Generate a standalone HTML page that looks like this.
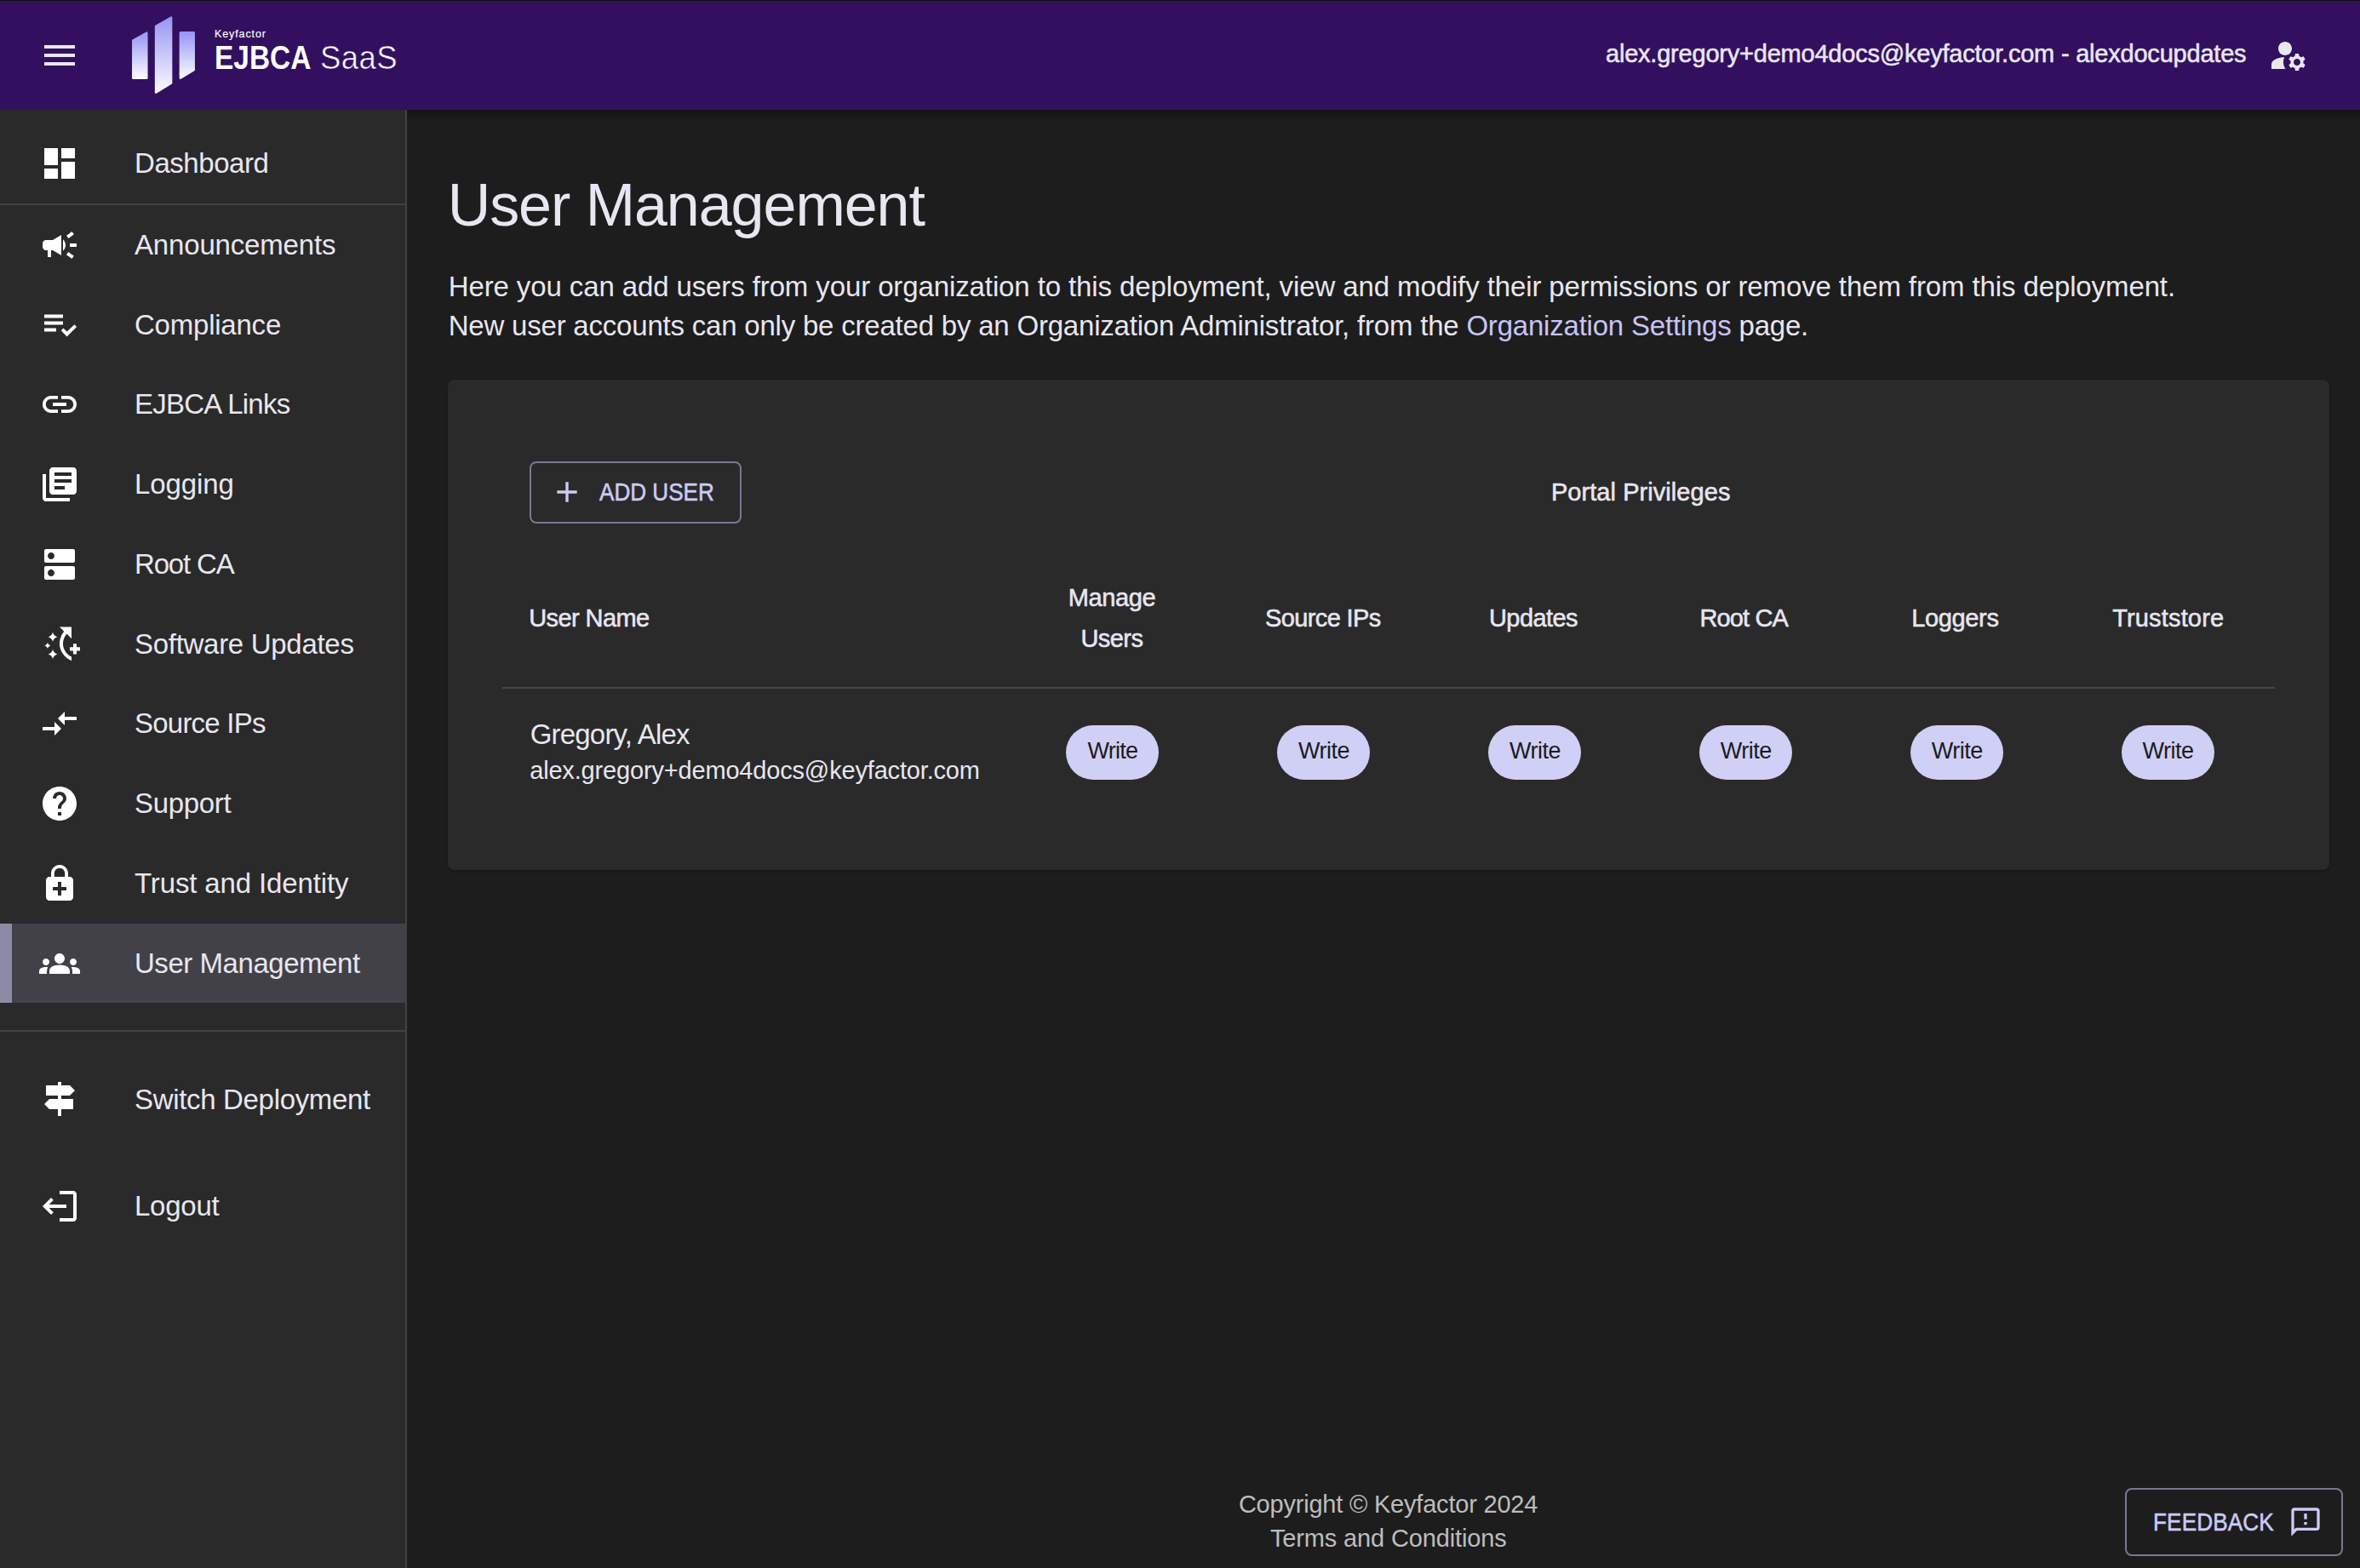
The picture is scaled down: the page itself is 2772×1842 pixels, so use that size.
<!DOCTYPE html><html><head><meta charset="utf-8"><style>html,body{margin:0;padding:0;width:2772px;height:1842px;overflow:hidden;background:#1d1d1d;}.t{position:absolute;white-space:nowrap;font-family:'Liberation Sans', sans-serif;}.m{-webkit-text-stroke:0.55px currentColor;}</style></head><body>
<div style="position:absolute;left:478px;top:129px;width:2294px;height:1713px;background:#1d1d1d;"></div>
<div style="position:absolute;left:478px;top:129px;width:2294px;height:14px;background:linear-gradient(#141414,rgba(29,29,29,0));"></div>
<div style="position:absolute;left:0px;top:129px;width:476px;height:1713px;background:#2a2a2a;"></div>
<div style="position:absolute;left:476px;top:129px;width:2px;height:1713px;background:#424242;"></div>
<div style="position:absolute;left:0px;top:0px;width:2772px;height:129px;background:#32105f;"></div>
<div style="position:absolute;left:0px;top:0px;width:2772px;height:1px;background:#0e0f0a;"></div>
<div style="position:absolute;left:0px;top:1px;width:2772px;height:1px;background:#36106a;"></div>
<svg style="position:absolute;left:46px;top:41px;" width="48" height="48" viewBox="0 0 24 24" fill="#e8e6f0"><path d="M3 18h18v-2H3v2zm0-5h18v-2H3v2zm0-7v2h18V6H3z"/></svg>
<svg style="position:absolute;left:0;top:0" width="260" height="129" viewBox="0 0 260 129"><defs><linearGradient id="lg" x1="0" y1="0" x2="0" y2="1"><stop offset="0" stop-color="#9896f4"/><stop offset="1" stop-color="#fbfaff"/></linearGradient></defs><g fill="url(#lg)" stroke="url(#lg)" stroke-width="2.5" stroke-linejoin="round"><path d="M156.3 47.6L172.3 38.6V91.8H156.3Z"/><path d="M183.1 30.8L201.1 20.6V97.8L183.1 108.6Z"/><path d="M211.9 38.2H227.7V82.2L211.9 91.6Z"/></g></svg>
<div class="t" style="left:252.00px;top:34.42px;font-size:12.5px;line-height:12.5px;color:#ffffff;font-weight:400;letter-spacing:0.9px;-webkit-text-stroke:0.15px #fff;">Keyfactor</div>
<div class="t" style="left:252.00px;top:49.13px;font-size:38px;line-height:38px;color:#ffffff;font-weight:700;transform:scaleX(0.88);transform-origin:0 0;">EJBCA</div>
<div class="t" style="left:376.00px;top:49.13px;font-size:38px;line-height:38px;color:#ffffff;font-weight:400;transform:scaleX(0.96);transform-origin:0 0;letter-spacing:0.5px;-webkit-text-stroke:0.6px #32105f;">SaaS</div>
<div class="t m" id="f0" style="left:1886.02px;top:49.35px;font-size:29px;line-height:29px;color:#e8e6f0;font-weight:400;letter-spacing:-0.215px;">alex.gregory+demo4docs@keyfactor.com - alexdocupdates</div>
<svg style="position:absolute;left:2664px;top:41px;" width="48" height="48" viewBox="0 0 24 24" fill="#e8e6f0"><path d="M10.67 13.02c-.22-.01-.44-.02-.67-.02-2.42 0-4.68.67-6.61 1.82-.88.52-1.39 1.5-1.39 2.53V20h8.26c-.79-1.13-1.26-2.51-1.26-4 0-1.07.25-2.07.67-2.98zM20.75 16c0-.22-.03-.42-.06-.63l1.14-1.01-1-1.73-1.45.49c-.32-.27-.68-.48-1.08-.63L18 11h-2l-.3 1.49c-.4.15-.76.36-1.08.63l-1.45-.49-1 1.73 1.14 1.01c-.03.21-.06.41-.06.63s.03.42.06.63l-1.14 1.01 1 1.73 1.45-.49c.32.27.68.48 1.08.63L16 21h2l.3-1.49c.4-.15.76-.36 1.08-.63l1.45.49 1-1.73-1.14-1.01c.03-.21.06-.41.06-.63zM17 18c-1.1 0-2-.9-2-2s.9-2 2-2 2 .9 2 2-.9 2-2 2zM10 4c-2.21 0-4 1.79-4 4s1.79 4 4 4 4-1.79 4-4-1.79-4-4-4z"/></svg>
<svg style="position:absolute;left:46px;top:168.1px;" width="48" height="48" viewBox="0 0 24 24" fill="#fff"><path d="M3 13h8V3H3v10zm0 8h8v-6H3v6zm10 0h8V11h-8v10zm0-18v6h8V3h-8z"/></svg>
<div class="t" id="f1" style="left:158.00px;top:175.17px;font-size:33px;line-height:33px;color:#e8e6f0;font-weight:400;letter-spacing:-0.450px;">Dashboard</div>
<div style="position:absolute;left:0px;top:239px;width:476px;height:2px;background:#424242;"></div>
<svg style="position:absolute;left:46px;top:263.875px;" width="48" height="48" viewBox="0 0 24 24" fill="#fff"><path d="M18 11v2h4v-2h-4zm-2 6.61c.96.71 2.21 1.65 3.2 2.39.4-.53.8-1.07 1.2-1.6-.99-.74-2.24-1.68-3.2-2.4-.4.54-.8 1.08-1.2 1.61zM20.4 5.6c-.4-.53-.8-1.07-1.2-1.6-.99.74-2.24 1.68-3.2 2.4.4.53.8 1.07 1.2 1.6.96-.72 2.21-1.65 3.2-2.4zM4 9c-1.1 0-2 .9-2 2v2c0 1.1.9 2 2 2h1v4h2v-4h1l5 3V6L8 9H4zm11.5 3c0-1.330-.58-2.53-1.5-3.35v6.69c.92-.81 1.5-2.01 1.5-3.34z"/></svg>
<div class="t" id="f2" style="left:158.00px;top:270.94px;font-size:33px;line-height:33px;color:#e8e6f0;font-weight:400;letter-spacing:-0.167px;">Announcements</div>
<svg style="position:absolute;left:46px;top:357.625px;" width="48" height="48" viewBox="0 0 24 24" fill="#fff"><path d="M3 5.6875h11v2H3zM3 9.6875h11v2H3zM3 13.6875h7v2H3zM12.9 15.15l1.3-1.35 2.05 1.9 4.5-4.1 1.25 1.35-5.75 5.75z"/></svg>
<div class="t" id="f3" style="left:158.00px;top:364.69px;font-size:33px;line-height:33px;color:#e8e6f0;font-weight:400;letter-spacing:-0.222px;">Compliance</div>
<svg style="position:absolute;left:46px;top:451.375px;" width="48" height="48" viewBox="0 0 24 24" fill="#fff"><path d="M3.9 12c0-1.71 1.39-3.1 3.1-3.1h4V7H7c-2.76 0-5 2.24-5 5s2.24 5 5 5h4v-1.9H7c-1.71 0-3.1-1.39-3.1-3.1zM8 13h8v-2H8v2zm9-6h-4v1.9h4c1.71 0 3.1 1.39 3.1 3.1s-1.39 3.1-3.1 3.1h-4V17h4c2.76 0 5-2.24 5-5s-2.24-5-5-5z"/></svg>
<div class="t" id="f4" style="left:158.00px;top:458.44px;font-size:33px;line-height:33px;color:#e8e6f0;font-weight:400;letter-spacing:-0.760px;">EJBCA Links</div>
<svg style="position:absolute;left:46px;top:545.125px;" width="48" height="48" viewBox="0 0 24 24" fill="#fff"><path d="M4 6H2v14c0 1.1.9 2 2 2h14v-2H4V6zm16-4H8c-1.1 0-2 .9-2 2v12c0 1.1.9 2 2 2h12c1.1 0 2-.9 2-2V4c0-1.1-.9-2-2-2zm-1 9H9V9h10v2zm-4 4H9v-2h6v2zm4-8H9V5h10v2z"/></svg>
<div class="t" id="f5" style="left:158.00px;top:552.19px;font-size:33px;line-height:33px;color:#e8e6f0;font-weight:400;letter-spacing:-0.100px;">Logging</div>
<svg style="position:absolute;left:46px;top:638.875px;" width="48" height="48" viewBox="0 0 24 24" fill="#fff"><path d="M20 13H4c-.55 0-1 .45-1 1v6c0 .55.45 1 1 1h16c.55 0 1-.45 1-1v-6c0-.55-.45-1-1-1zM7 19c-1.1 0-2-.9-2-2s.9-2 2-2 2 .9 2 2-.9 2-2 2zM20 3H4c-.55 0-1 .45-1 1v6c0 .55.45 1 1 1h16c.55 0 1-.45 1-1V4c0-.55-.45-1-1-1zM7 9c-1.1 0-2-.9-2-2s.9-2 2-2 2 .9 2 2-.9 2-2 2z"/></svg>
<div class="t" id="f6" style="left:158.00px;top:645.94px;font-size:33px;line-height:33px;color:#e8e6f0;font-weight:400;letter-spacing:-1.167px;">Root CA</div>
<svg style="position:absolute;left:46px;top:732.625px;" width="48" height="48" viewBox="0 0 24 24" fill="#fff"><path d="M19 21.6A10.85 10.85 0 0 1 14.6 4.4L12 1.7H19V8.6L16.25 5.7A8.59 8.59 0 0 0 19 19.3ZM8 4.9Q8.605 7.045 10.75 7.65Q8.605 8.255 8 10.4Q7.395 8.255 5.25 7.65Q7.395 7.045 8 4.9ZM4.95 11.0Q5.324 12.325999999999999 6.65 12.7Q5.324 13.074 4.95 14.399999999999999Q4.5760000000000005 13.074 3.25 12.7Q4.5760000000000005 12.325999999999999 4.95 11.0ZM8 14.95Q8.605 17.095 10.75 17.7Q8.605 18.305 8 20.45Q7.395 18.305 5.25 17.7Q7.395 17.095 8 14.95ZM20 11.6h2v2.05h2v2.05h-2v2.05h-2v-2.05h-2v-2.05h2z"/></svg>
<div class="t" id="f7" style="left:158.00px;top:739.69px;font-size:33px;line-height:33px;color:#e8e6f0;font-weight:400;letter-spacing:-0.293px;">Software Updates</div>
<svg style="position:absolute;left:46px;top:826.375px;" width="48" height="48" viewBox="0 0 24 24" fill="#fff"><path d="M9.01 14H2v2h7.01v3L13 15l-3.99-4v3zm5.98-1v-3H22V8h-7.01V5L11 9l3.99 4z"/></svg>
<div class="t" id="f8" style="left:158.00px;top:833.44px;font-size:33px;line-height:33px;color:#e8e6f0;font-weight:400;letter-spacing:-0.778px;">Source IPs</div>
<svg style="position:absolute;left:46px;top:920.125px;" width="48" height="48" viewBox="0 0 24 24" fill="#fff"><path d="M12 2C6.48 2 2 6.48 2 12s4.48 10 10 10 10-4.48 10-10S17.52 2 12 2zm1 17h-2v-2h2v2zm2.07-7.75l-.9.92C13.45 12.9 13 13.5 13 15h-2v-.5c0-1.1.45-2.1 1.17-2.83l1.24-1.26c.37-.36.59-.86.59-1.41 0-1.1-.9-2-2-2s-2 .9-2 2H8c0-2.21 1.790-4 4-4s4 1.79 4 4c0 .88-.36 1.68-.93 2.25z"/></svg>
<div class="t" id="f9" style="left:158.00px;top:927.19px;font-size:33px;line-height:33px;color:#e8e6f0;font-weight:400;letter-spacing:-0.333px;">Support</div>
<svg style="position:absolute;left:46px;top:1013.875px;" width="48" height="48" viewBox="0 0 24 24" fill="#fff"><path d="M18 8h-1V6c0-2.76-2.24-5-5-5S7 3.24 7 6v2H6c-1.1 0-2 .9-2 2v10c0 1.1.9 2 2 2h12c1.1 0 2-.9 2-2V10c0-1.1-.9-2-2-2zM8.9 6c0-1.71 1.39-3.1 3.1-3.1s3.1 1.39 3.1 3.1v2H8.9V6zM16 16h-3v3h-2v-3H8v-2h3v-3h2v3h3v2z"/></svg>
<div class="t" id="f10" style="left:158.00px;top:1020.94px;font-size:33px;line-height:33px;color:#e8e6f0;font-weight:400;letter-spacing:-0.129px;">Trust and Identity</div>
<div style="position:absolute;left:0px;top:1085px;width:476px;height:93px;background:#424148;"></div>
<div style="position:absolute;left:0px;top:1085px;width:14px;height:93px;background:#8c8ba6;"></div>
<svg style="position:absolute;left:46px;top:1107.625px;" width="48" height="48" viewBox="0 0 24 24" fill="#fff"><path d="M12 12.75c1.63 0 3.07.39 4.24.9 1.08.48 1.76 1.56 1.76 2.73V18H6v-1.61c0-1.18.68-2.26 1.76-2.73 1.17-.52 2.61-.91 4.24-.91zM4 13c1.1 0 2-.9 2-2s-.9-2-2-2-2 .9-2 2 .9 2 2 2zm1.13 1.1c-.37-.06-.74-.1-1.13-.1-.99 0-1.93.21-2.78.58C.48 14.9 0 15.62 0 16.43V18h4.5v-1.61c0-.83.23-1.61.63-2.290zM20 13c1.1 0 2-.9 2-2s-.9-2-2-2-2 .9-2 2 .9 2 2 2zm4 3.43c0-.81-.48-1.53-1.22-1.85-.85-.37-1.79-.58-2.78-.58-.39 0-.76.04-1.13.1.4.68.63 1.46.63 2.29V18H24v-1.57zM12 6c1.66 0 3 1.34 3 3s-1.34 3-3 3-3-1.34-3-3 1.34-3 3-3z"/></svg>
<div class="t" id="f11" style="left:158.00px;top:1114.69px;font-size:33px;line-height:33px;color:#e8e6f0;font-weight:400;letter-spacing:-0.457px;">User Management</div>
<div style="position:absolute;left:0px;top:1210px;width:476px;height:2px;background:#424242;"></div>
<svg style="position:absolute;left:46px;top:1267px;" width="48" height="48" viewBox="0 0 24 24" fill="#fff"><path d="M13 10h5l3-3-3-3h-5V2h-2v2H4v6h7v2H6l-3 3 3 3h5v4h2v-4h7v-6h-7z"/></svg>
<div class="t" id="f12" style="left:158.00px;top:1274.57px;font-size:33px;line-height:33px;color:#e8e6f0;font-weight:400;letter-spacing:-0.325px;">Switch Deployment</div>
<svg style="position:absolute;left:46px;top:1393px;transform:scaleX(-1);" width="48" height="48" viewBox="0 0 24 24" fill="#fff"><path d="M17 7l-1.41 1.41L18.17 11H8v2h10.17l-2.58 2.58L17 17l5-5zM4 5h8V3H4c-1.1 0-2 .9-2 2v14c0 1.1.9 2 2 2h8v-2H4V5z"/></svg>
<div class="t" id="f13" style="left:158.00px;top:1400.07px;font-size:33px;line-height:33px;color:#e8e6f0;font-weight:400;letter-spacing:-0.240px;">Logout</div>
<div class="t" id="f14" style="left:525.66px;top:206.25px;font-size:70px;line-height:70px;color:#e8e6f0;font-weight:400;letter-spacing:-1.043px;">User Management</div>
<div class="t" id="f15" style="left:526.70px;top:319.87px;font-size:33px;line-height:33px;color:#e8e6f0;font-weight:400;letter-spacing:-0.110px;">Here you can add users from your organization to this deployment, view and modify their permissions or remove them from this deployment.</div>
<div class="t" id="f16" style="left:526.70px;top:366.07px;font-size:33px;line-height:33px;color:#e8e6f0;font-weight:400;letter-spacing:-0.207px;">New user accounts can only be created by an Organization Administrator, from the <span style="color:#c6c4f6">Organization Settings</span> page.</div>
<div style="position:absolute;left:526px;top:446px;width:2210px;height:576px;background:#2a2a2a;border-radius:8px;box-shadow:0 2px 3px rgba(0,0,0,0.25);"></div>
<div style="position:absolute;left:622px;top:542px;width:248.5px;height:72.7px;background:transparent;box-sizing:border-box;border:2px solid #7a7890;border-radius:8px;"></div>
<svg style="position:absolute;left:645.7px;top:557.7px;" width="40" height="40" viewBox="0 0 24 24" fill="#cccaf6"><path d="M19 13h-6v6h-2v-6H5v-2h6V5h2v6h6v2z"/></svg>
<div class="t m" id="f17" style="left:703.62px;top:563.75px;font-size:29px;line-height:29px;color:#cccaf6;font-weight:400;letter-spacing:-0.014px;transform:scaleX(0.9);transform-origin:0 0;">ADD USER</div>
<div class="t m" id="f18" style="left:1927.20px;transform:translateX(-50%);top:563.55px;font-size:29px;line-height:29px;color:#e8e6f0;font-weight:400;letter-spacing:0.062px;">Portal Privileges</div>
<div class="t m" id="f19" style="left:621.20px;top:711.85px;font-size:29px;line-height:29px;color:#e8e6f0;font-weight:400;letter-spacing:-0.575px;">User Name</div>
<div class="t m" id="f20" style="left:1306.00px;transform:translateX(-50%);top:687.65px;font-size:29px;line-height:29px;color:#e8e6f0;font-weight:400;letter-spacing:-0.400px;">Manage</div>
<div class="t m" id="f21" style="left:1305.92px;transform:translateX(-50%);top:735.75px;font-size:29px;line-height:29px;color:#e8e6f0;font-weight:400;letter-spacing:-0.550px;">Users</div>
<div class="t m" id="f22" style="left:1553.82px;transform:translateX(-50%);top:711.85px;font-size:29px;line-height:29px;color:#e8e6f0;font-weight:400;letter-spacing:-0.644px;">Source IPs</div>
<div class="t m" id="f23" style="left:1801.02px;transform:translateX(-50%);top:711.85px;font-size:29px;line-height:29px;color:#e8e6f0;font-weight:400;letter-spacing:-0.567px;">Updates</div>
<div class="t m" id="f24" style="left:2048.20px;transform:translateX(-50%);top:711.85px;font-size:29px;line-height:29px;color:#e8e6f0;font-weight:400;letter-spacing:-0.867px;">Root CA</div>
<div class="t m" id="f25" style="left:2296.36px;transform:translateX(-50%);top:711.85px;font-size:29px;line-height:29px;color:#e8e6f0;font-weight:400;letter-spacing:-0.333px;">Loggers</div>
<div class="t m" id="f26" style="left:2546.74px;transform:translateX(-50%);top:711.85px;font-size:29px;line-height:29px;color:#e8e6f0;font-weight:400;letter-spacing:0.156px;">Truststore</div>
<div style="position:absolute;left:590px;top:807px;width:2082px;height:2px;background:#474747;"></div>
<div class="t" id="f27" style="left:622.68px;top:846.07px;font-size:33px;line-height:33px;color:#e8e6f0;font-weight:400;letter-spacing:-0.800px;">Gregory, Alex</div>
<div class="t" id="f28" style="left:622.20px;top:891.45px;font-size:29px;line-height:29px;color:#e8e6f0;font-weight:400;letter-spacing:-0.171px;">alex.gregory+demo4docs@keyfactor.com</div>
<div style="position:absolute;left:1252.3px;top:852px;width:109px;height:64px;background:#d0cff5;border-radius:32px;"></div>
<div class="t" id="f29" style="left:1306.88px;transform:translateX(-50%);top:868.94px;font-size:27px;line-height:27px;color:#1c1b1f;font-weight:400;letter-spacing:-0.750px;">Write</div>
<div style="position:absolute;left:1500.2px;top:852px;width:109px;height:64px;background:#d0cff5;border-radius:32px;"></div>
<div class="t" id="f30" style="left:1555.02px;transform:translateX(-50%);top:868.94px;font-size:27px;line-height:27px;color:#1c1b1f;font-weight:400;letter-spacing:-0.500px;">Write</div>
<div style="position:absolute;left:1748.2px;top:852px;width:109px;height:64px;background:#d0cff5;border-radius:32px;"></div>
<div class="t" id="f31" style="left:1803.02px;transform:translateX(-50%);top:868.94px;font-size:27px;line-height:27px;color:#1c1b1f;font-weight:400;letter-spacing:-0.500px;">Write</div>
<div style="position:absolute;left:1996.1px;top:852px;width:109px;height:64px;background:#d0cff5;border-radius:32px;"></div>
<div class="t" id="f32" style="left:2050.76px;transform:translateX(-50%);top:868.94px;font-size:27px;line-height:27px;color:#1c1b1f;font-weight:400;letter-spacing:-0.500px;">Write</div>
<div style="position:absolute;left:2244.1px;top:852px;width:109px;height:64px;background:#d0cff5;border-radius:32px;"></div>
<div class="t" id="f33" style="left:2298.76px;transform:translateX(-50%);top:868.94px;font-size:27px;line-height:27px;color:#1c1b1f;font-weight:400;letter-spacing:-0.500px;">Write</div>
<div style="position:absolute;left:2492.0px;top:852px;width:109px;height:64px;background:#d0cff5;border-radius:32px;"></div>
<div class="t" id="f34" style="left:2546.50px;transform:translateX(-50%);top:868.94px;font-size:27px;line-height:27px;color:#1c1b1f;font-weight:400;letter-spacing:-0.500px;">Write</div>
<div class="t" id="f35" style="left:1630.52px;transform:translateX(-50%);top:1753.25px;font-size:29px;line-height:29px;color:#bdbdbd;font-weight:400;letter-spacing:-0.208px;">Copyright © Keyfactor 2024</div>
<div class="t" id="f36" style="left:1630.76px;transform:translateX(-50%);top:1793.35px;font-size:29px;line-height:29px;color:#bdbdbd;font-weight:400;letter-spacing:-0.137px;">Terms and Conditions</div>
<div style="position:absolute;left:2496px;top:1748px;width:256px;height:80px;background:transparent;box-sizing:border-box;border:2px solid #7a7890;border-radius:8px;"></div>
<div class="t m" id="f37" style="left:2528.70px;top:1773.65px;font-size:29px;line-height:29px;color:#cccaf6;font-weight:400;letter-spacing:0.157px;transform:scaleX(0.9);transform-origin:0 0;">FEEDBACK</div>
<svg style="position:absolute;left:2687.6px;top:1767.8px;" width="40" height="40" viewBox="0 0 24 24" fill="#cccaf6"><path d="M20 2H4c-1.1 0-1.99.9-1.99 2L2 22l4-4h14c1.1 0 2-.9 2-2V4c0-1.1-.9-2-2-2zm0 14H5.17l-.59.59-.58.58V4h16v12zm-9-4h2v2h-2zm0-6h2v4h-2z"/></svg>
</body></html>
